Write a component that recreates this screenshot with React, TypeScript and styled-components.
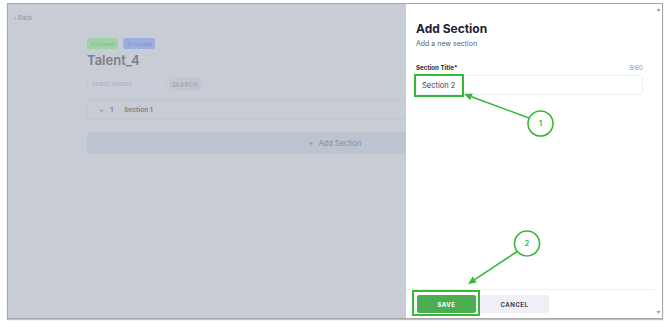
import styled, { createGlobalStyle } from 'styled-components'

const GlobalStyle = createGlobalStyle`
  body {
    margin: 0;
    background: #ffffff;
    font-family: 'Inter', 'Noto Sans', sans-serif;
  }
`

const Shot = styled.div`
  position: relative;
  width: 670px;
  height: 322px;
  overflow: hidden;
`

const Frame = styled.div`
  position: absolute;
  left: 7px;
  top: 3px;
  width: 654px;
  height: 314px;
  border: 1px solid #a8a8a8;
  box-shadow: 0 1px 1px rgba(0, 0, 0, 0.25);
  display: flex;
  overflow: hidden;
`

const Page = styled.div`
  width: 398px;
  flex: none;
  background: #c8ccd5;
  overflow: hidden;
`

const Header = styled.div`
  height: 25px;
  border-bottom: 1px solid #ccd0d8;
  display: flex;
  align-items: center;
  padding-left: 6px;
  padding-top: 1px;
  font-size: 6px;
  color: #8c919d;
`

const Content = styled.div`
  width: 496px;
  padding: 7px 0 0 79px;
  display: flex;
  flex-direction: column;
`

const BadgeRow = styled.div`
  display: flex;
  gap: 5px;
`

const Badge = styled.span<{ $tone: 'green' | 'blue' }>`
  height: 11px;
  padding: 0 4px;
  display: flex;
  align-items: center;
  border-radius: 2px;
  font-size: 5px;
  background: ${(p) => (p.$tone === 'green' ? '#9fd3a6' : '#9caee0')};
  color: ${(p) => (p.$tone === 'green' ? '#86b78c' : '#7f92c6')};
`

const Title = styled.h1`
  margin: 3px 0 0;
  font-size: 13px;
  line-height: 16px;
  font-weight: 600;
  color: #7a7f8b;
`

const SearchRow = styled.div`
  margin-top: 8px;
  display: flex;
  align-items: center;
  gap: 3px;
`

const SearchInput = styled.div`
  width: 73px;
  height: 14px;
  border: 1px solid #c3c8d1;
  border-radius: 2px;
  background: #cacdd7;
  display: flex;
  align-items: center;
  padding-left: 4px;
  font-size: 5.5px;
  color: #a9adb8;
`

const SearchButton = styled.div`
  width: 32px;
  height: 14px;
  background: #c1c6d0;
  border-radius: 2px;
  display: flex;
  align-items: center;
  justify-content: center;
  font-size: 6px;
  letter-spacing: 0.3px;
  color: #9aa0ac;
`

const SectionRow = styled.div`
  margin-top: 7px;
  height: 19px;
  border: 1px solid #c1c6cf;
  border-radius: 3px;
  display: flex;
  align-items: center;
  gap: 6px;
  padding-left: 11px;
  font-size: 6.5px;
  font-weight: 700;
  color: #80858f;
`

const SectionName = styled.span`
  margin-left: 5px;
`

const AddBar = styled.div`
  margin-top: 12px;
  height: 22px;
  border-radius: 3px;
  background: #bcc3d1;
  display: flex;
  align-items: center;
  justify-content: center;
  gap: 5px;
  font-size: 7.5px;
  color: #878d9a;
`

const Drawer = styled.div`
  width: 249px;
  flex: none;
  background: #ffffff;
  display: flex;
  flex-direction: column;
`

const DrawerBody = styled.div`
  padding: 17px 12px 0 10px;
  display: flex;
  flex-direction: column;
`

const DrawerTitle = styled.h2`
  margin: 0;
  font-size: 12px;
  line-height: 16px;
  font-weight: 700;
  color: #1c2232;
`

const DrawerSub = styled.p`
  margin: 2px 0 0;
  font-size: 7px;
  line-height: 10px;
  color: #5b5e66;
`

const LabelRow = styled.div`
  margin-top: 14px;
  display: flex;
  justify-content: space-between;
  font-size: 6.2px;
  line-height: 9px;
`

const Label = styled.span`
  font-weight: 700;
  color: #272c38;
`

const Counter = styled.span`
  color: #8e9096;
`

const Field = styled.div`
  margin-top: 3px;
  height: 18px;
  border: 1px solid #eceef1;
  border-radius: 3px;
  display: flex;
  align-items: center;
  padding-left: 5px;
  font-size: 7.5px;
  color: #363b47;
`

const Footer = styled.div`
  margin-top: auto;
  border-top: 1px solid #eceef1;
  padding: 5px 0 5px 11px;
  display: flex;
  gap: 4px;
`

const Button = styled.div<{ $primary?: boolean }>`
  height: 18px;
  width: ${(p) => (p.$primary ? '59px' : '69px')};
  border-radius: 2px;
  display: flex;
  align-items: center;
  justify-content: center;
  font-size: 6px;
  font-weight: 700;
  letter-spacing: 0.5px;
  background: ${(p) => (p.$primary ? '#4cae52' : '#eef0f6')};
  color: ${(p) => (p.$primary ? '#ffffff' : '#3a3f4e')};
`

const Scrollbar = styled.div`
  width: 7px;
  flex: none;
  background: #ffffff;
  display: flex;
  flex-direction: column;
  justify-content: space-between;
  align-items: center;
  padding: 4px 0 3px;
  font-size: 4px;
  line-height: 4px;
  color: #9a9a9a;
`

const Marks = styled.svg`
  position: absolute;
  left: 0;
  top: 0;
  pointer-events: none;
`

const MarkText = styled.text`
  font-family: 'Inter', sans-serif;
  font-size: 7px;
  font-weight: 700;
  fill: #36b936;
`

const green = '#36b936'

const Arrow = ({ x1, y1, x2, y2 }: { x1: number; y1: number; x2: number; y2: number }) => {
  const a = Math.atan2(y2 - y1, x2 - x1)
  const len = 8
  const w = 3.6
  const bx = x2 - Math.cos(a) * len
  const by = y2 - Math.sin(a) * len
  const px = -Math.sin(a) * w
  const py = Math.cos(a) * w
  return (
    <g>
      <line x1={x1} y1={y1} x2={bx} y2={by} stroke={green} strokeWidth={1.6} />
      <polygon points={`${x2},${y2} ${bx + px},${by + py} ${bx - px},${by - py}`} fill={green} />
    </g>
  )
}

const Callout = ({ cx, cy, n }: { cx: number; cy: number; n: string }) => (
  <g>
    <circle cx={cx} cy={cy} r={12.5} fill="#ffffff" stroke={green} strokeWidth={1.6} />
    <MarkText x={cx} y={cy + 2.5} textAnchor="middle">
      {n}
    </MarkText>
  </g>
)

export default function App() {
  return (
    <Shot>
      <GlobalStyle />
      <Frame>
        <Page>
          <Header>‹ Back</Header>
          <Content>
            <BadgeRow>
              <Badge $tone="green">Published</Badge>
              <Badge $tone="blue">Encrypted</Badge>
            </BadgeRow>
            <Title>Talent_4</Title>
            <SearchRow>
              <SearchInput>Search lessons</SearchInput>
              <SearchButton>SEARCH</SearchButton>
            </SearchRow>
            <SectionRow>
              <span>⌄</span>
              <span>1</span>
              <SectionName>Section 1</SectionName>
            </SectionRow>
            <AddBar>
              <span>+</span>
              <span>Add Section</span>
            </AddBar>
          </Content>
        </Page>
        <Drawer>
          <DrawerBody>
            <DrawerTitle>Add Section</DrawerTitle>
            <DrawerSub>Add a new section</DrawerSub>
            <LabelRow>
              <Label>Section Title*</Label>
              <Counter>9/60</Counter>
            </LabelRow>
            <Field>Section 2</Field>
          </DrawerBody>
          <Footer>
            <Button $primary>SAVE</Button>
            <Button>CANCEL</Button>
          </Footer>
        </Drawer>
        <Scrollbar>
          <span>▲</span>
          <span>▼</span>
        </Scrollbar>
      </Frame>
      <Marks width={670} height={322}>
        <rect x={415} y={75} width={48} height={21} fill="none" stroke={green} strokeWidth={2} />
        <rect x={413} y={291} width={66} height={24} fill="none" stroke={green} strokeWidth={2} />
        <Arrow x1={529} y1={118} x2={464} y2={94} />
        <Arrow x1={518} y1={251} x2={468} y2={284} />
        <Callout cx={540.5} cy={123.5} n="1" />
        <Callout cx={527} cy={243.5} n="2" />
      </Marks>
    </Shot>
  )
}
